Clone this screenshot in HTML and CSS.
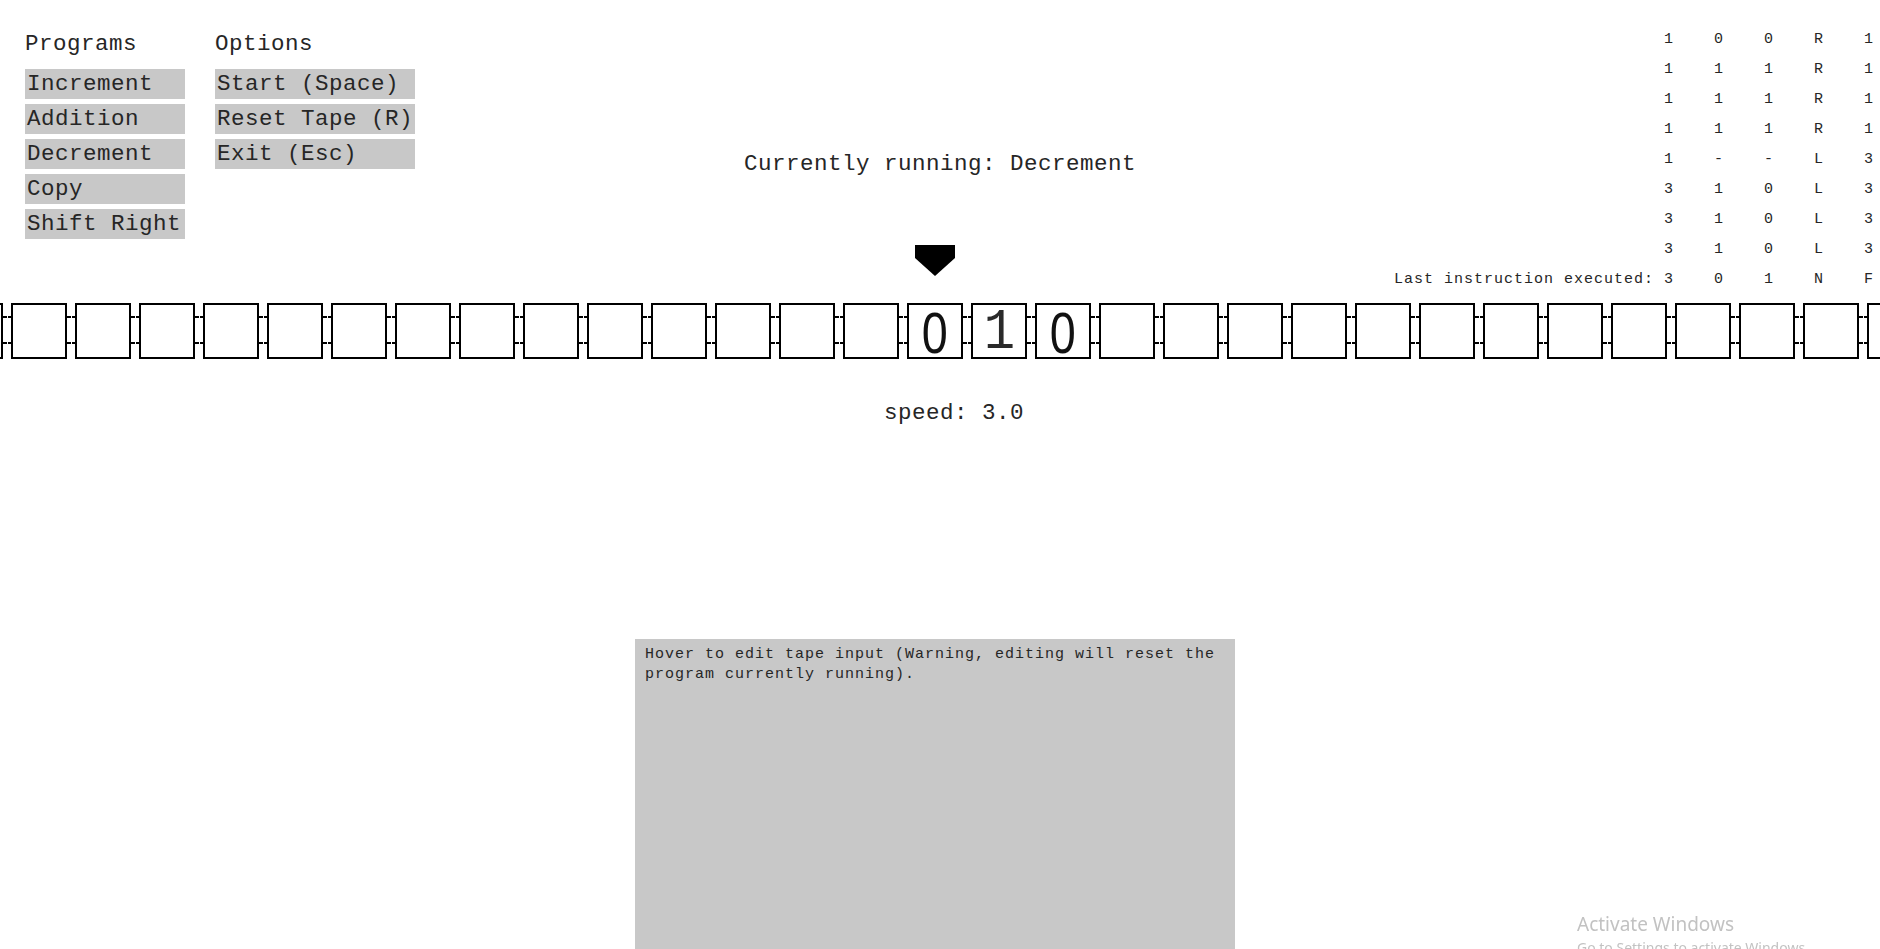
FILE: index.html
```html
<!DOCTYPE html>
<html lang="en">
<head>
<meta charset="utf-8">
<title>Turing Machine</title>
<link rel="stylesheet" href="styles.css">
</head>
<body>
<div class="app">
  <header class="top">
    <nav class="menus">
      <div class="menu">
        <div class="menu-title">Programs</div>
        <div class="btn prog">Increment</div>
        <div class="btn prog">Addition</div>
        <div class="btn prog">Decrement</div>
        <div class="btn prog">Copy</div>
        <div class="btn prog">Shift Right</div>
      </div>
      <div class="menu">
        <div class="menu-title">Options</div>
        <div class="btn opt">Start (Space)</div>
        <div class="btn opt">Reset Tape (R)</div>
        <div class="btn opt">Exit (Esc)</div>
      </div>
    </nav>
    <div class="status">
      <div class="running">Currently running: Decrement</div>
      <svg class="head" width="40" height="31" viewBox="0 0 40 31"><polygon points="0,0 40,0 40,13 20,31 0,13" fill="#000"/></svg>
    </div>
    <div class="rules">
      <span></span><span>1</span><span>0</span><span>0</span><span>R</span><span>1</span>
      <span></span><span>1</span><span>1</span><span>1</span><span>R</span><span>1</span>
      <span></span><span>1</span><span>1</span><span>1</span><span>R</span><span>1</span>
      <span></span><span>1</span><span>1</span><span>1</span><span>R</span><span>1</span>
      <span></span><span>1</span><span>-</span><span>-</span><span>L</span><span>3</span>
      <span></span><span>3</span><span>1</span><span>0</span><span>L</span><span>3</span>
      <span></span><span>3</span><span>1</span><span>0</span><span>L</span><span>3</span>
      <span></span><span>3</span><span>1</span><span>0</span><span>L</span><span>3</span>
      <span class="label">Last instruction executed: </span><span>3</span><span>0</span><span>1</span><span>N</span><span>F</span>
    </div>
  </header>

  <div class="tape">
    <div class="cell"></div><div class="link"></div>
    <div class="cell"></div><div class="link"></div>
    <div class="cell"></div><div class="link"></div>
    <div class="cell"></div><div class="link"></div>
    <div class="cell"></div><div class="link"></div>
    <div class="cell"></div><div class="link"></div>
    <div class="cell"></div><div class="link"></div>
    <div class="cell"></div><div class="link"></div>
    <div class="cell"></div><div class="link"></div>
    <div class="cell"></div><div class="link"></div>
    <div class="cell"></div><div class="link"></div>
    <div class="cell"></div><div class="link"></div>
    <div class="cell"></div><div class="link"></div>
    <div class="cell"></div><div class="link"></div>
    <div class="cell"></div><div class="link"></div>
    <div class="cell"><span class="sym zero">0</span></div><div class="link"></div>
    <div class="cell"><span class="sym one">1</span></div><div class="link"></div>
    <div class="cell"><span class="sym zero">0</span></div><div class="link"></div>
    <div class="cell"></div><div class="link"></div>
    <div class="cell"></div><div class="link"></div>
    <div class="cell"></div><div class="link"></div>
    <div class="cell"></div><div class="link"></div>
    <div class="cell"></div><div class="link"></div>
    <div class="cell"></div><div class="link"></div>
    <div class="cell"></div><div class="link"></div>
    <div class="cell"></div><div class="link"></div>
    <div class="cell"></div><div class="link"></div>
    <div class="cell"></div><div class="link"></div>
    <div class="cell"></div><div class="link"></div>
    <div class="cell"></div><div class="link"></div>
    <div class="cell"></div>
  </div>

  <div class="speed">speed: 3.0</div>

  <div class="editor">
    <p>Hover to edit tape input (Warning, editing will reset the program currently running).</p>
  </div>
</div>

<div class="watermark">
  <div class="wm-title">Activate Windows</div>
  <div class="wm-sub">Go to Settings to activate Windows.</div>
</div>
</body>
</html>
```

FILE: styles.css
```css
html, body {
  margin: 0;
  padding: 0;
  background: #fff;
}

body {
  width: 1880px;
  height: 949px;
  overflow: hidden;
  color: #000;
  font-family: "Liberation Mono", "Courier New", monospace;
}

.app {
  width: 1880px;
}

/* ---------- header ---------- */
.top {
  display: grid;
  grid-template-columns: 1fr auto 1fr;
  align-items: start;
}

.menus {
  display: flex;
  gap: 30px;
  padding: 30px 0 0 25px;
}

.menu {
  display: flex;
  flex-direction: column;
  gap: 5px;
}

.menu-title,
.btn,
.running,
.speed {
  font-size: 22.5px;
  letter-spacing: 0.5px;
  white-space: pre;
  color: #262626;
}

.menu-title {
  line-height: 28px;
  margin-bottom: 6px;
}

.btn {
  height: 30px;
  line-height: 31px;
  padding-left: 2px;
  background: #c8c8c8;
  box-sizing: border-box;
}

.btn.prog { width: 160px; }
.btn.opt { width: 200px; }

.status {
  display: flex;
  flex-direction: column;
  align-items: center;
  padding: 150px 0 27px;
}

.running {
  line-height: 28px;
}

.head {
  display: block;
  margin-top: 67px;
  margin-right: 10px;
}

.rules {
  justify-self: end;
  display: grid;
  grid-template-columns: auto 50px 50px 50px 50px 16px;
  grid-auto-rows: 30px;
  padding-top: 25px;
  font-size: 15px;
  letter-spacing: 1px;
  line-height: 30px;
  white-space: pre;
  color: #262626;
}

/* ---------- tape ---------- */
.tape {
  display: flex;
  align-items: flex-start;
  margin-left: -53px;
  height: 56px;
}

.cell {
  flex: 0 0 56px;
  width: 56px;
  height: 56px;
  box-sizing: border-box;
  border: 2px solid #000;
  display: flex;
  align-items: center;
  justify-content: center;
}

.sym {
  display: block;
  font-size: 60px;
  line-height: 52px;
  padding-top: 4px;
  color: #111;
}

.sym.one {
  font-size: 58px;
  color: #2a2a2a;
  transform: scaleX(0.9);
}

.sym.zero {
  font-family: "Liberation Sans", Arial, sans-serif;
  font-size: 57px;
  transform: scaleX(0.82);
}

.link {
  flex: 0 0 8px;
  height: 56px;
  background-image:
    linear-gradient(to right, #000 0 4px, transparent 4px 5px, #000 5px 8px),
    linear-gradient(to right, #000 0 4px, transparent 4px 5px, #000 5px 8px);
  background-size: 8px 2px, 8px 2px;
  background-position: 0 13px, 0 39px;
  background-repeat: no-repeat;
}

/* ---------- speed ---------- */
.speed {
  margin-top: 40px;
  line-height: 28px;
  text-align: center;
  padding-left: 28px;
}

/* ---------- editor ---------- */
.editor {
  margin: 212px 0 0 635px;
  width: 600px;
  height: 400px;
  box-sizing: border-box;
  padding: 6px 10px;
  background: #c8c8c8;
}

.editor p {
  margin: 0;
  font-size: 15px;
  letter-spacing: 1px;
  line-height: 20px;
  color: #262626;
}

/* ---------- OS watermark overlay ---------- */
.watermark {
  position: fixed;
  left: 1577px;
  top: 910px;
  color: #c2c2c2;
  font-family: "Noto Sans", "Open Sans", sans-serif;
  white-space: nowrap;
}

.wm-title {
  font-size: 19px;
  line-height: 28px;
}

.wm-sub {
  font-size: 14px;
  line-height: 20px;
}
```
